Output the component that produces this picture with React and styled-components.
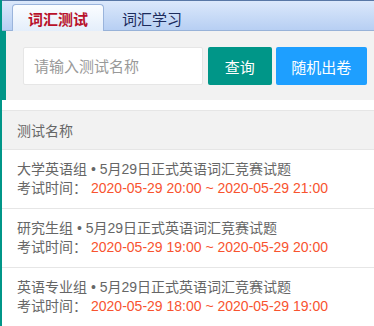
import styled, { createGlobalStyle } from 'styled-components';

const GlobalStyle = createGlobalStyle`
  html, body {
    margin: 0;
    padding: 0;
    background: #fff;
  }
  body {
    font-family: 'Liberation Sans', 'Noto Sans CJK SC', sans-serif;
    font-size: 14px;
    color: #666;
  }
`;

const Page = styled.div`
  min-height: 100vh;
  border-left: 2px solid #009688;
  box-sizing: border-box;
`;

const TabBar = styled.div`
  height: 31px;
  box-sizing: border-box;
  display: flex;
  align-items: flex-end;
  padding-left: 10px;
  border-top: 1px solid #5877a6;
  border-bottom: 1px solid #98b2d8;
  background: linear-gradient(to bottom, #dbe8fb, #b7cff3);
`;

const Tab = styled.div`
  height: ${(p) => (p.$active ? '27px' : '26px')};
  width: ${(p) => (p.$active ? '92px' : '96px')};
  box-sizing: border-box;
  display: flex;
  align-items: center;
  justify-content: center;
  font-size: 15px;
  font-weight: ${(p) => (p.$active ? 700 : 400)};
  color: ${(p) => (p.$active ? '#b8112b' : '#1c2b5c')};
  margin-bottom: -1px;
  border: 1px solid ${(p) => (p.$active ? '#9ab4dc' : 'transparent')};
  border-bottom: none;
  border-radius: 4px 4px 0 0;
  background: ${(p) =>
    p.$active ? 'linear-gradient(to bottom, #fbfdff, #e4eefb)' : 'transparent'};
`;

const SearchPanel = styled.div`
  display: flex;
  align-items: center;
  padding: 16px 7px 15px 17px;
  background: #f2f2f2;
  border-left: 4px solid #009688;
`;

const SearchInput = styled.input`
  width: 180px;
  height: 38px;
  box-sizing: border-box;
  padding: 0 10px;
  border: 1px solid #e6e6e6;
  border-radius: 2px;
  background: #fff;
  font-family: inherit;
  font-size: 15px;
  color: #333;
  outline: none;

  &::placeholder {
    color: #999;
  }
`;

const Button = styled.button`
  height: 38px;
  width: ${(p) => p.$width}px;
  margin-left: ${(p) => p.$gap}px;
  border: none;
  border-radius: 2px;
  background: ${(p) => p.$color};
  color: #fff;
  font-family: inherit;
  font-size: 15px;
  padding: 0;
  cursor: pointer;
`;

const List = styled.div`
  margin-top: 10px;
`;

const ListHeader = styled.div`
  height: 38px;
  display: flex;
  align-items: center;
  padding-left: 15px;
  background: #f2f2f2;
  border-top: 1px solid #e6e6e6;
  border-bottom: 1px solid #e6e6e6;
  color: #666;
`;

const Item = styled.div`
  padding: 10px 15px 10px;
  line-height: 19px;
  border-bottom: 1px solid #e6e6e6;
`;

const Title = styled.div`
  color: #666;
`;

const TimeLine = styled.div`
  color: #666;
`;

const TimeValue = styled.span`
  color: #f8532f;
  margin-left: 4px;
`;

const exams = [
  { group: '大学英语组', start: '2020-05-29 20:00', end: '2020-05-29 21:00' },
  { group: '研究生组', start: '2020-05-29 19:00', end: '2020-05-29 20:00' },
  { group: '英语专业组', start: '2020-05-29 18:00', end: '2020-05-29 19:00' },
];

export default function App() {
  return (
    <>
      <GlobalStyle />
      <Page>
        <TabBar>
          <Tab $active>词汇测试</Tab>
          <Tab>词汇学习</Tab>
        </TabBar>
        <SearchPanel>
          <SearchInput placeholder="请输入测试名称" />
          <Button $color="#009688" $width={64} $gap={5}>
            查询
          </Button>
          <Button $color="#1e9fff" $width={92} $gap={4}>
            随机出卷
          </Button>
        </SearchPanel>
        <List>
          <ListHeader>测试名称</ListHeader>
          {exams.map((exam) => (
            <Item key={exam.group}>
              <Title>{exam.group} • 5月29日正式英语词汇竞赛试题</Title>
              <TimeLine>
                考试时间：
                <TimeValue>
                  {exam.start} ~ {exam.end}
                </TimeValue>
              </TimeLine>
            </Item>
          ))}
        </List>
      </Page>
    </>
  );
}
